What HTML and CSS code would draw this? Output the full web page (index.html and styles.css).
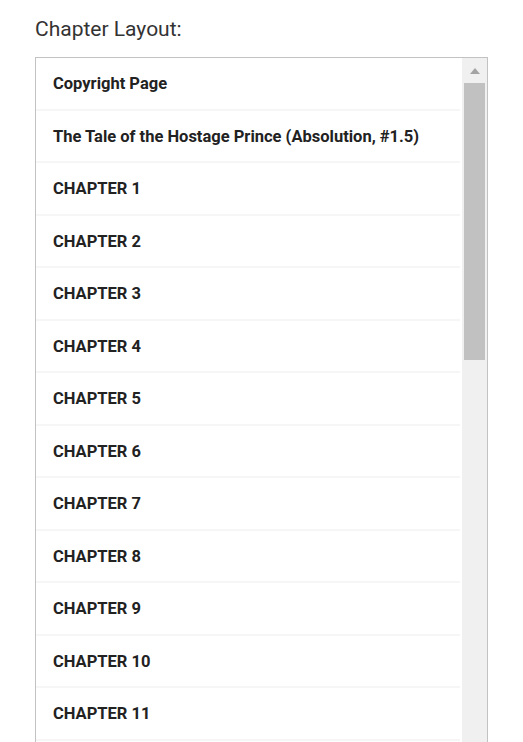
FILE: index.html
```html
<!DOCTYPE html>
<html>
<head>
<meta charset="utf-8">
<link rel="stylesheet" href="styles.css">
</head>
<body>
<div class="page">
  <div class="title">Chapter Layout:</div>
  <div class="box">
    <ul class="list">
      <li class="row">Copyright Page</li>
      <li class="row">The Tale of the Hostage Prince (Absolution, #1.5)</li>
      <li class="row">CHAPTER 1</li>
      <li class="row">CHAPTER 2</li>
      <li class="row">CHAPTER 3</li>
      <li class="row">CHAPTER 4</li>
      <li class="row">CHAPTER 5</li>
      <li class="row">CHAPTER 6</li>
      <li class="row">CHAPTER 7</li>
      <li class="row">CHAPTER 8</li>
      <li class="row">CHAPTER 9</li>
      <li class="row">CHAPTER 10</li>
      <li class="row">CHAPTER 11</li>
    </ul>
    <div class="scrollbar">
      <div class="arrow"><svg width="10" height="6" viewBox="0 0 10 6"><path d="M0 6 L5 0 L10 6 Z" fill="#a3a3a3"/></svg></div>
      <div class="thumb"></div>
    </div>
  </div>
</div>
</body>
</html>
```
FILE: styles.css
```css
html, body {
  margin: 0;
  padding: 0;
  background: #ffffff;
  overflow: hidden;
}
.page {
  padding: 17px 0 0 35px;
  font-family: Roboto, "Liberation Sans", sans-serif;
}
.title {
  font-size: 21px;
  line-height: 25px;
  color: #333333;
  margin-bottom: 15px;
}
.box {
  width: 451px;
  height: 720px;
  border: 1px solid #c2c2c2;
  display: flex;
  overflow: hidden;
  background: #ffffff;
}
.list {
  list-style: none;
  margin: 0;
  padding: 0;
  width: 424px;
  flex: none;
}
.row {
  box-sizing: border-box;
  height: 52.5px;
  border-bottom: 2px solid #f6f6f6;
  display: flex;
  align-items: center;
  padding: 1px 0 0 17px;
  font-size: 16.5px;
  font-weight: 700;
  color: #222222;
}
.scrollbar {
  margin-left: 2px;
  width: 25px;
  background: #f0f0f0;
  display: flex;
  flex-direction: column;
  align-items: center;
}
.arrow {
  height: 25px;
  display: flex;
  align-items: center;
  justify-content: center;
}
.thumb {
  width: 21px;
  height: 277px;
  background: #c1c1c1;
}
```
